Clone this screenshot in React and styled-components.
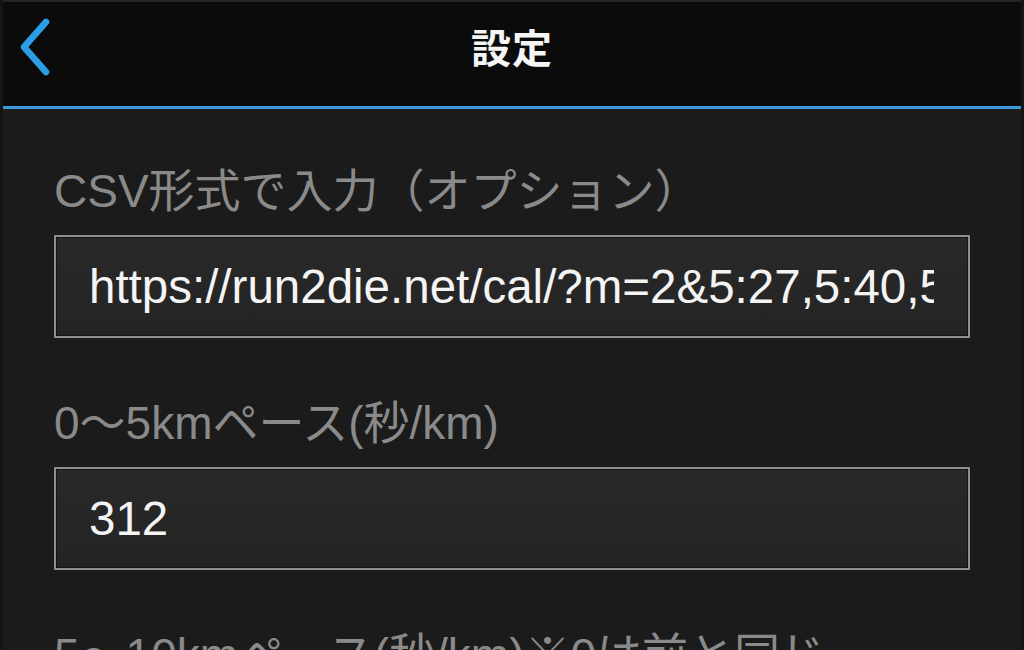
import React from 'react'
import styled, { createGlobalStyle } from 'styled-components'

const GlobalStyle = createGlobalStyle`
html, body {
  margin: 0;
  padding: 0;
  height: 650px;
  overflow: hidden;
  background: #1b1b1b;
}
* { box-sizing: border-box; }
`

const Page = styled.div`
height: 650px;
overflow: hidden;
background: #1b1b1b;
border-left: 3px solid #151515;
border-right: 3px solid #151515;
font-family: "Liberation Sans", "Noto Sans CJK JP", sans-serif;
`

const Header = styled.header`
display: grid;
grid-template-columns: 1fr auto 1fr;
align-items: start;
height: 109px;
background: #0b0b0b;
border-top: 2px solid #262626;
border-bottom: 3px solid #3b9ad9;
`

const BackButton = styled.button`
justify-self: start;
display: flex;
align-items: center;
height: 92px;
padding: 0 0 0 13px;
margin: 0;
background: none;
border: none;
cursor: pointer;
`

const Title = styled.h1`
margin: 0;
font-family: "Noto Sans CJK JP", sans-serif;
font-size: 40px;
font-weight: 700;
line-height: 88px;
color: #f5f5f5;
letter-spacing: 1px;
`

const Form = styled.main`
display: flex;
flex-direction: column;
gap: 57px;
padding: 54px 51px 0 51px;
`

const Field = styled.div`
display: flex;
flex-direction: column;
gap: 16px;
`

const Label = styled.label`
display: block;
font-size: 46px;
line-height: 56px;
height: 56px;
color: #8a8a8a;
white-space: nowrap;
`

const Input = styled.input`
display: block;
width: 100%;
height: 103px;
margin: 0;
padding: 0 34px 0 33px;
font-family: "Liberation Sans", "Noto Sans CJK JP", sans-serif;
font-size: 47.5px;
color: #f4f4f4;
background: linear-gradient(#292929, #242424);
border: 2px solid #8e8e8e;
border-radius: 0;
box-shadow: inset 0 0 0 1px #141414;
outline: none;
`

const ChevronLeft = () => (
  <svg width="40" height="64" viewBox="0 0 40 64">
    <path
      d="M30 6 L8 31 L30 56"
      fill="none"
      stroke="#2c9ee6"
      strokeWidth="6.5"
      strokeLinecap="round"
      strokeLinejoin="round"
    />
  </svg>
)

const fields = [
  { id: 'csv', label: 'CSV形式で入力（オプション）', value: 'https://run2die.net/cal/?m=2&5:27,5:40,5:35,5:30' },
  { id: 'p1', label: '0〜5kmペース(秒/km)', value: '312' },
  { id: 'p2', label: '5〜10kmペース(秒/km)※0は前と同じ', value: '0' },
]

const App = () => {
  return (
    <Page>
      <GlobalStyle />
      <Header>
        <BackButton aria-label="戻る">
          <ChevronLeft />
        </BackButton>
        <Title>設定</Title>
        <span />
      </Header>
      <Form>
        {fields.map((f) => (
          <Field key={f.id}>
            <Label htmlFor={f.id}>{f.label}</Label>
            <Input id={f.id} type="text" readOnly defaultValue={f.value} />
          </Field>
        ))}
      </Form>
    </Page>
  )
}

export default App
